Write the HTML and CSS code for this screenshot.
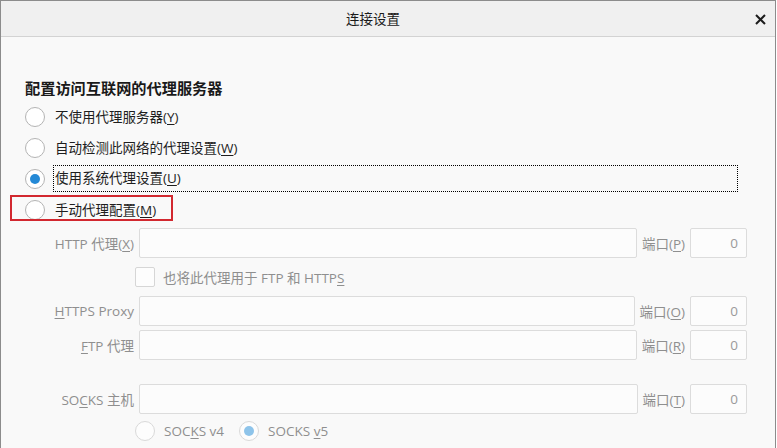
FILE: index.html
```html
<!DOCTYPE html>
<html lang="zh-CN">
<head>
<meta charset="utf-8">
<title>连接设置</title>
<link rel="stylesheet" href="styles.css">
</head>
<body>
<div class="window">
  <div class="titlebar">
    <div class="title">连接设置</div>
    <div class="close">
      <svg width="11" height="11" viewBox="0 0 11 11"><path d="M1 1L10 10M10 1L1 10" stroke="#1c1c1c" stroke-width="2" fill="none"/></svg>
    </div>
  </div>
  <div class="content">
    <div class="heading">配置访问互联网的代理服务器</div>
    <div class="choices">
      <div class="choice"><span class="radio"></span><span class="choice-label">不使用代理服务器(<u>Y</u>)</span></div>
      <div class="choice"><span class="radio"></span><span class="choice-label">自动检测此网络的代理设置(<u>W</u>)</span></div>
      <div class="choice"><span class="radio checked"></span><span class="choice-label focused">使用系统代理设置(<u>U</u>)</span></div>
      <div class="choice"><span class="radio"></span><span class="choice-label">手动代理配置(<u>M</u>)</span></div>
    </div>
    <div class="manual">
      <div class="field">
        <span class="field-label">HTTP 代理(<u>X</u>)</span>
        <span class="input"></span>
        <span class="port-label">端口(<u>P</u>)</span>
        <span class="input port">0</span>
      </div>
      <div class="check-row">
        <span class="checkbox"></span>
        <span class="check-label">也将此代理用于 FTP 和 HTTP<u>S</u></span>
      </div>
      <div class="field">
        <span class="field-label"><u>H</u>TTPS Proxy</span>
        <span class="input"></span>
        <span class="port-label">端口(<u>O</u>)</span>
        <span class="input port">0</span>
      </div>
      <div class="field gap-small">
        <span class="field-label"><u>F</u>TP 代理</span>
        <span class="input"></span>
        <span class="port-label">端口(<u>R</u>)</span>
        <span class="input port">0</span>
      </div>
      <div class="field gap-large">
        <span class="field-label">SO<u>C</u>KS 主机</span>
        <span class="input"></span>
        <span class="port-label">端口(<u>T</u>)</span>
        <span class="input port">0</span>
      </div>
      <div class="socks-row">
        <span class="radio disabled"></span>
        <span class="socks-label">SOC<u>K</u>S v4</span>
        <span class="radio disabled checked"></span>
        <span class="socks-label">SOCKS <u>v</u>5</span>
      </div>
    </div>
  </div>
  <div class="highlight"></div>
</div>
</body>
</html>
```
FILE: styles.css
```css
html, body {
  margin: 0;
  padding: 0;
  background: #ffffff;
}

body {
  font-family: "Open Sans", "Noto Sans CJK SC", sans-serif;
  font-size: 13.5px;
  color: #1e1e1e;
}

u {
  text-decoration: underline;
  text-underline-offset: 2px;
  text-decoration-thickness: 1px;
}

.window {
  position: relative;
  width: 774px;
  height: 447px;
  border: 1px solid #8c8c8c;
  border-bottom: none;
  background: #f9f9f9;
  overflow: hidden;
}

.titlebar {
  height: 35px;
  background: #f0f0f0;
  border-bottom: 1px solid #d3d3d3;
  display: flex;
  align-items: center;
}

.title {
  flex: 1;
  text-align: center;
  font-size: 13.5px;
  color: #1a1a1a;
  line-height: 20px;
}

.close {
  width: 30px;
  height: 35px;
  display: flex;
  align-items: center;
  justify-content: center;
  padding-top: 2px;
  box-sizing: border-box;
}

.content {
  padding: 41px 28px 0 24px;
}

.heading {
  font-size: 15.2px;
  font-weight: 700;
  line-height: 20px;
  height: 20px;
  color: #1a1a1a;
  margin-bottom: 3px;
}

.choice {
  display: flex;
  align-items: center;
  height: 31px;
}

.radio {
  width: 20px;
  height: 20px;
  box-sizing: border-box;
  border: 1px solid #b4b4b4;
  border-radius: 50%;
  background: #ffffff;
  flex: none;
  display: flex;
  align-items: center;
  justify-content: center;
}

.radio.checked::after {
  content: "";
  width: 10px;
  height: 10px;
  border-radius: 50%;
  background: #2489d6;
}

.radio.disabled {
  border-color: #d9d9d9;
  background: #fdfdfd;
}

.radio.disabled.checked::after {
  background: #8ec4ea;
}

.choice-label {
  margin-left: 8px;
  padding: 0 1px;
  height: 27px;
  line-height: 27px;
  box-sizing: border-box;
  border: 1px solid transparent;
}

.choice-label.focused {
  flex: 1;
  margin-right: 9px;
  border: 1px dotted #000000;
  line-height: 25px;
}

.manual {
  margin-top: 3px;
  color: #8f8f8f;
}

.field {
  display: flex;
  align-items: center;
  height: 30px;
}

.field.gap-small {
  margin-top: 4px;
}

.field.gap-large {
  margin-top: 24px;
}

.field-label {
  width: 109px;
  margin-right: 5px;
  text-align: right;
  white-space: nowrap;
  flex: none;
}

.input {
  flex: 1;
  height: 30px;
  box-sizing: border-box;
  border: 1px solid #dcdcdc;
  border-radius: 2px;
  background: #fcfcfc;
}

.input.port {
  flex: none;
  width: 57px;
  text-align: right;
  padding-right: 8px;
  line-height: 28px;
  color: #9a9a9a;
}

.port-label {
  margin: 0 5px;
  white-space: nowrap;
}

.check-row {
  display: flex;
  align-items: center;
  height: 38px;
  padding-left: 110px;
}

.checkbox {
  width: 20px;
  height: 20px;
  box-sizing: border-box;
  border: 1px solid #d6d6d6;
  border-radius: 2px;
  background: #fdfdfd;
}

.check-label {
  margin-left: 8px;
}

.socks-row {
  display: flex;
  align-items: center;
  height: 34px;
  padding-left: 110px;
}

.socks-label {
  margin-left: 9px;
  margin-right: 15px;
}

.highlight {
  position: absolute;
  left: 9px;
  top: 194px;
  width: 163px;
  height: 26px;
  box-sizing: border-box;
  border: 2px solid #d2282f;
}
```
